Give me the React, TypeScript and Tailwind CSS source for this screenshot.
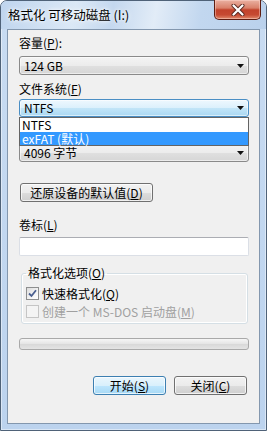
import type { ReactNode } from 'react';

const comboGray =
  'border-[#8a8a8a] bg-[linear-gradient(to_bottom,#f4f4f4_0%,#ececec_50%,#e0e0e0_51%,#d6d6d6_100%)]';
const comboBlue =
  'border-[#4a8ec4] bg-[linear-gradient(to_bottom,#eef8fe_0%,#dbf0fc_50%,#c2e5f8_51%,#aad8f2_100%)]';

function Arrow() {
  return (
    <svg width="7" height="4" viewBox="0 0 7 4" className="shrink-0">
      <path d="M0 0h7L3.5 4z" fill="#111" />
    </svg>
  );
}

function Combo({ children, focused = false }: { children: ReactNode; focused?: boolean }) {
  return (
    <div
      className={`flex w-[230px] items-center justify-between rounded-[3px] border pl-[4px] pr-[4px] shadow-[inset_0_0_0_1px_rgba(255,255,255,0.55)] ${
        focused ? `h-[18px] ${comboBlue}` : `h-[19px] ${comboGray}`
      }`}
    >
      <span className="leading-[14px]">{children}</span>
      <Arrow />
    </div>
  );
}

function Button({ children, primary = false, className = '' }: { children: ReactNode; primary?: boolean; className?: string }) {
  return (
    <button
      className={`flex h-[19px] items-center justify-center rounded-[3px] border leading-[14px] shadow-[inset_0_0_0_1px_rgba(255,255,255,0.7)] ${
        primary
          ? 'border-[#3c7fb1] bg-[linear-gradient(to_bottom,#eaf6fd_0%,#d9f0fc_50%,#bee6fd_51%,#a7d9f5_100%)]'
          : 'border-[#707070] bg-[linear-gradient(to_bottom,#f2f2f2_0%,#ebebeb_50%,#dddddd_51%,#cfcfcf_100%)]'
      } ${className}`}
    >
      {children}
    </button>
  );
}

function Checkbox({ checked = false, disabled = false }: { checked?: boolean; disabled?: boolean }) {
  return (
    <span
      className={`flex h-[13px] w-[13px] shrink-0 items-center justify-center border ${
        disabled
          ? 'border-[#c5c5c5] bg-[#f4f4f4]'
          : 'border-[#8e8f8f] bg-[linear-gradient(135deg,#dcdcdc_0%,#f4f4f4_60%,#ffffff_100%)]'
      }`}
    >
      {checked && (
        <svg width="9" height="9" viewBox="0 0 9 9">
          <path d="M1 4.5 L3.5 7 L8 1.2" fill="none" stroke="#4a5f8f" strokeWidth="1.8" />
        </svg>
      )}
    </span>
  );
}

export default function App() {
  return (
    <div className="h-[431px] w-[267px] bg-white font-['Noto_Sans_CJK_SC',sans-serif] text-[12px] text-black">
      <div className="flex h-[431px] w-[267px] flex-col rounded-t-[7px] border border-[#4f6278] bg-[linear-gradient(to_bottom,#c9dcf2,#bcd3ee)] shadow-[inset_0_0_0_1px_rgba(255,255,255,0.45)]">
        <div className="flex h-[28px] items-start rounded-t-[6px] bg-[linear-gradient(100deg,#bfd5ee_0%,#dbe8f6_28%,#c4d8ef_42%,#e2ecf7_58%,#c2d7ef_75%,#bad1ec_100%)]">
          <span className="mt-[6px] ml-[7px] text-[12.5px] leading-[16px] [text-shadow:0_0_6px_#fff,0_0_3px_#fff]">
            格式化 可移动磁盘 (I:)
          </span>
          <div className="-mt-px mr-[5px] ml-auto flex h-[20px] w-[47px] items-center justify-center rounded-b-[5px] border border-t-0 border-[#5d1d12] bg-[linear-gradient(to_bottom,#eab1a2_0%,#d9806a_42%,#c2432c_52%,#c64a32_78%,#e08a6c_100%)] shadow-[inset_0_0_0_1px_rgba(255,220,210,0.45)]">
            <svg width="14" height="12" viewBox="0 0 14 12">
              <path d="M2.5 1.5 L11.5 10.5 M11.5 1.5 L2.5 10.5" stroke="#5a2a22" strokeWidth="4" strokeLinecap="round" />
              <path d="M2.5 1.5 L11.5 10.5 M11.5 1.5 L2.5 10.5" stroke="#ffffff" strokeWidth="2.2" strokeLinecap="round" />
            </svg>
          </div>
        </div>

        <div className="mx-[6px] mb-[6px] flex flex-1 flex-col border border-[#8397ae] bg-[#f0f0f0] pt-[5px] pl-[11px]">
          <div className="h-[16px] leading-[16px]">
            容量(<u>P</u>):
          </div>
          <div className="mt-[5px]">
            <Combo>124 GB</Combo>
          </div>
          <div className="mt-[6px] h-[16px] leading-[16px]">
            文件系统(<u>F</u>)
          </div>
          <div className="relative mt-[2px]">
            <Combo focused>NTFS</Combo>
            <div className="absolute top-full left-0 z-10 w-[230px] border border-[#646464] bg-white">
              <div className="flex h-[14px] items-center pl-[2px] leading-[14px]">NTFS</div>
              <div className="flex h-[13px] items-center bg-[#3399ff] pl-[2px] leading-[13px] text-white">exFAT (默认)</div>
            </div>
          </div>
          <div className="h-[26px]" />
          <Combo>4096 字节</Combo>

          <Button className="mt-[21px] ml-px w-[133px]">
            还原设备的默认值(<u>D</u>)
          </Button>

          <div className="mt-[15px] h-[16px] leading-[16px]">
            卷标(<u>L</u>)
          </div>
          <div className="mt-[4px] h-[19px] w-[230px] rounded-[2px] border border-[#dbdfe6] border-t-[#abadb3] bg-white" />

          <fieldset className="mt-[9px] ml-[2px] w-[227px] rounded-[3px] border border-[#d5dfe5] px-[4px] pb-[4px] shadow-[inset_0_0_0_1px_#fff]">
            <legend className="px-[2px] leading-[16px]">
              格式化选项(<u>O</u>)
            </legend>
            <div className="mt-[5px] flex h-[15px] items-center gap-[3px] leading-[15px]">
              <Checkbox checked />
              <span>
                快速格式化(<u>Q</u>)
              </span>
            </div>
            <div className="mt-[3px] flex h-[15px] items-center gap-[3px] leading-[15px] text-[#a0a0a0]">
              <Checkbox disabled />
              <span>
                创建一个 MS-DOS 启动盘(<u>M</u>)
              </span>
            </div>
          </fieldset>

          <div className="mt-[14px] h-[12px] w-[230px] rounded-[3px] border border-[#a9a9a9] bg-[linear-gradient(to_bottom,#f6f6f6_0%,#e6e6e6_45%,#d9d9d9_55%,#e4e4e4_100%)]" />

          <div className="mt-[26px] flex w-[230px] justify-end gap-[8px] pr-[2px]">
            <Button primary className="w-[73px]">
              开始(<u>S</u>)
            </Button>
            <Button className="w-[73px]">
              关闭(<u>C</u>)
            </Button>
          </div>
        </div>
      </div>
    </div>
  );
}
